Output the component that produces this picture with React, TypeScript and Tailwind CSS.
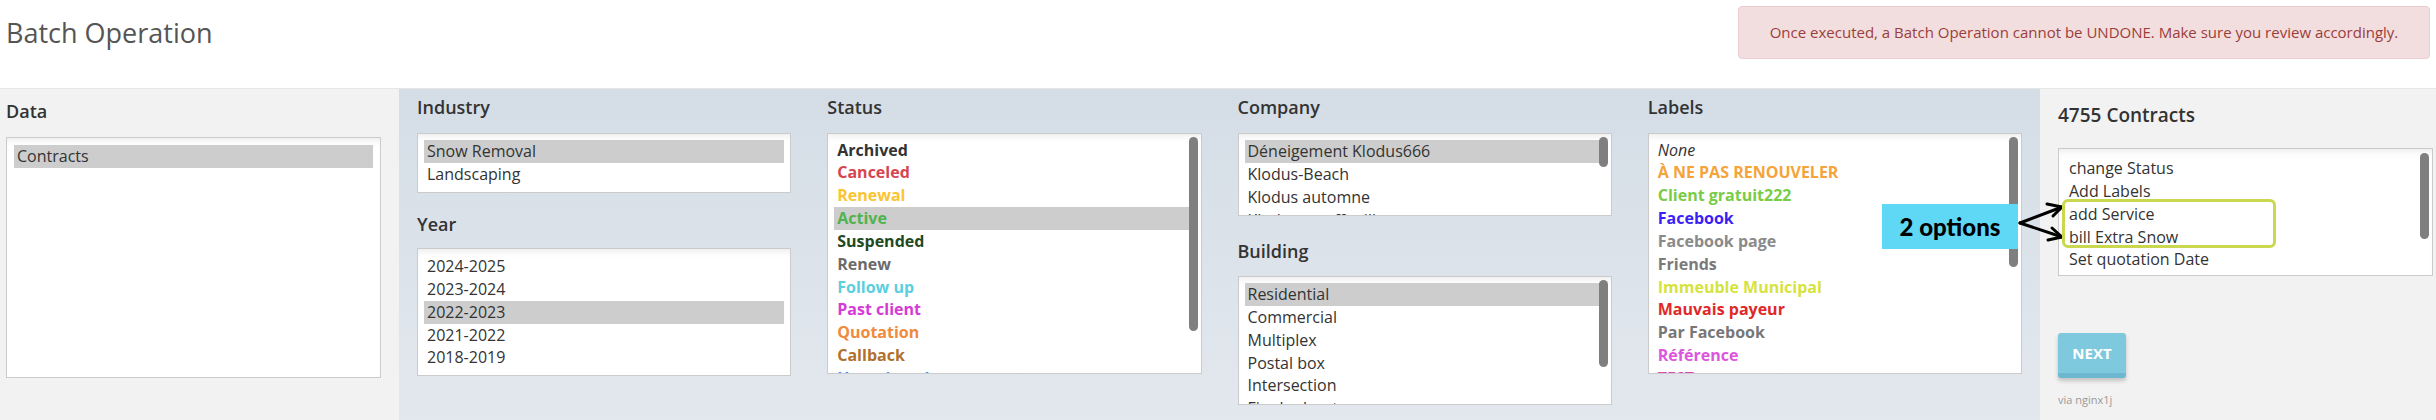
import React from "react";

type Opt = { t: string; c?: string; b?: boolean; i?: boolean; s?: boolean };

function ListBox({
  items,
  className,
  sb,
}: {
  items: Opt[];
  className: string;
  sb?: string;
}) {
  return (
    <div
      className={`relative overflow-hidden border border-[#cbcbcb] bg-white shadow-[inset_0_7px_8px_-6px_rgba(0,0,0,0.10)] ${className}`}
    >
      {items.map((o, k) => (
        <div
          key={k}
          className={`h-[22.85px] whitespace-nowrap px-[3px] text-[16px] leading-[22.85px] ${
            o.s ? "bg-[#cdcdcd]" : ""
          } ${o.b ? "font-bold" : ""} ${o.i ? "italic" : ""} ${o.c ?? "text-[#333]"}`}
        >
          {o.t}
        </div>
      ))}
      {sb ? <div className={`absolute right-[3px] w-[9px] rounded-full bg-[#7f7f7f] ${sb}`} /> : null}
    </div>
  );
}

const statusItems: Opt[] = [
  { t: "Archived", b: true, c: "text-[#333]" },
  { t: "Canceled", b: true, c: "text-[#d6454f]" },
  { t: "Renewal", b: true, c: "text-[#fbc531]" },
  { t: "Active", b: true, c: "text-[#4fb34f]", s: true },
  { t: "Suspended", b: true, c: "text-[#1f4a22]" },
  { t: "Renew", b: true, c: "text-[#6b6b6b]" },
  { t: "Follow up", b: true, c: "text-[#5acfe0]" },
  { t: "Past client", b: true, c: "text-[#d63ad6]" },
  { t: "Quotation", b: true, c: "text-[#f08a3c]" },
  { t: "Callback", b: true, c: "text-[#b0702e]" },
  { t: "Unassigned", b: true, c: "text-[#3a8ff0]" },
];

const labelItems: Opt[] = [
  { t: "None", i: true, c: "text-[#333]" },
  { t: "À NE PAS RENOUVELER", b: true, c: "text-[#f5a33b]" },
  { t: "Client gratuit222", b: true, c: "text-[#78cc46]" },
  { t: "Facebook", b: true, c: "text-[#3b1ff5]" },
  { t: "Facebook page", b: true, c: "text-[#8a8a8a]" },
  { t: "Friends", b: true, c: "text-[#7a7a7a]" },
  { t: "Immeuble Municipal", b: true, c: "text-[#d6e33d]" },
  { t: "Mauvais payeur", b: true, c: "text-[#e02828]" },
  { t: "Par Facebook", b: true, c: "text-[#777]" },
  { t: "Référence", b: true, c: "text-[#dd55dd]" },
  { t: "TEST", b: true, c: "text-[#d84bb0]" },
];

export default function App() {
  return (
    <div className="relative h-[420px] w-[2436px] overflow-hidden bg-white font-['Open_Sans',sans-serif] text-[#333]">
      <header className="flex h-[89px] items-start justify-between border-b border-[#e6e6e6]">
        <h1 className="pl-[6px] pt-[14px] text-[27px] font-normal leading-[37px] text-[#555]">
          Batch Operation
        </h1>
        <div className="mr-[6px] mt-[6px] flex h-[53px] w-[692px] items-center justify-center whitespace-nowrap rounded-[4px] border border-[#ebccd1] bg-[#f2dede] text-[15px] text-[#9b3d3b]">
          Once executed, a Batch Operation cannot be UNDONE. Make sure you review accordingly.
        </div>
      </header>
      <main className="flex h-[331px]">
        <section className="w-[399px] bg-[#f2f2f2] pl-[6px] pt-[10px]">
          <h2 className="text-[18px] font-semibold leading-[24px]">Data</h2>
          <ListBox className="mt-[14px] h-[241px] w-[375px] p-[7px]" items={[{ t: "Contracts", s: true }]} />
        </section>
        <section className="grid w-[1641px] grid-cols-4 bg-linear-to-b from-[#d4dde6] to-[#e3e8ee]">
          <div className="px-[18px] pt-[6px]">
            <h2 className="text-[18px] font-semibold leading-[24px]">Industry</h2>
            <ListBox
              className="mt-[14px] h-[60px] p-[6px]"
              items={[{ t: "Snow Removal", s: true }, { t: "Landscaping" }]}
            />
            <h2 className="mt-[19px] text-[18px] font-semibold leading-[24px]">Year</h2>
            <ListBox
              className="mt-[12px] h-[128px] p-[6px]"
              items={[
                { t: "2024-2025" },
                { t: "2023-2024" },
                { t: "2022-2023", s: true },
                { t: "2021-2022" },
                { t: "2018-2019" },
              ]}
            />
          </div>
          <div className="px-[18px] pt-[6px]">
            <h2 className="text-[18px] font-semibold leading-[24px]">Status</h2>
            <ListBox className="mt-[14px] h-[241px] px-[6px] pt-[4.5px]" items={statusItems} sb="top-[3px] h-[194px]" />
          </div>
          <div className="px-[18px] pt-[6px]">
            <h2 className="text-[18px] font-semibold leading-[24px]">Company</h2>
            <ListBox
              className="mt-[14px] h-[83px] p-[6px]"
              items={[
                { t: "Déneigement Klodus666", s: true },
                { t: "Klodus-Beach" },
                { t: "Klodus automne" },
                { t: "Klodus en effeuillage" },
              ]}
              sb="top-[3px] h-[30px]"
            />
            <h2 className="mt-[23px] text-[18px] font-semibold leading-[24px]">Building</h2>
            <ListBox
              className="mt-[13px] h-[129px] p-[6px]"
              items={[
                { t: "Residential", s: true },
                { t: "Commercial" },
                { t: "Multiplex" },
                { t: "Postal box" },
                { t: "Intersection" },
                { t: "Fire hydrant" },
              ]}
              sb="top-[3px] h-[87px]"
            />
          </div>
          <div className="px-[18px] pt-[6px]">
            <h2 className="text-[18px] font-semibold leading-[24px]">Labels</h2>
            <ListBox className="mt-[14px] h-[241px] px-[6px] pt-[4.5px]" items={labelItems} sb="top-[3px] h-[130px]" />
          </div>
        </section>
        <section className="flex-1 bg-[#f2f2f2] pl-[18px] pt-[13px]">
          <h2 className="text-[19px] font-semibold leading-[26px]">4755 Contracts</h2>
          <ListBox
            className="mt-[20px] h-[128px] w-[375px] px-[7px] pt-[8px]"
            items={[
              { t: "change Status" },
              { t: "Add Labels" },
              { t: "add Service" },
              { t: "bill Extra Snow" },
              { t: "Set quotation Date" },
              { t: "Generate invoice" },
            ]}
            sb="top-[4px] h-[86px]"
          />
          <button className="mt-[57px] h-[45px] w-[68px] rounded-[3px] border-b-[5px] border-[#6bb8d0] bg-[#7fc9df] text-[15px] font-bold text-white shadow-[0_3px_4px_rgba(0,0,0,0.2)]">
            NEXT
          </button>
          <div className="mt-[14px] text-[11px] leading-[16px] text-[#999]">via nginx1j</div>
        </section>
      </main>

      <div className="absolute left-[1882px] top-[204px] flex h-[45px] w-[136px] items-center justify-center bg-[#5fd8f5] font-['Lato',sans-serif] text-[24px] font-black text-black">
        2 options
      </div>
      <svg
        className="absolute left-[2016px] top-[196px]"
        width="52"
        height="52"
        viewBox="0 0 52 52"
        fill="none"
        stroke="black"
        strokeWidth="3"
        strokeLinecap="round"
        strokeLinejoin="round"
      >
        <path d="M4 27 L46 11" />
        <path d="M31 8 L46 11 L37 20" />
        <path d="M4 27 L46 41" />
        <path d="M36 32 L46 41 L32 44" />
      </svg>
      <div className="absolute left-[2062px] top-[199px] h-[49px] w-[214px] rounded-[6px] border-[3px] border-[#c9d84e]" />
    </div>
  );
}
